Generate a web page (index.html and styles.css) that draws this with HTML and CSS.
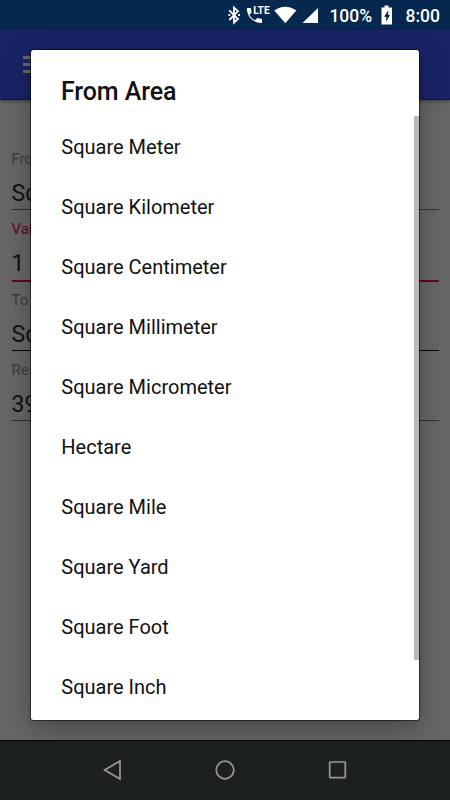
FILE: index.html
```html
<!DOCTYPE html>
<html lang="en">
<head>
<meta charset="utf-8">
<title>Area Converter</title>
<link rel="stylesheet" href="styles.css">
</head>
<body>
<div class="screen">
  <header class="status">
    <svg class="status-icons" width="100" height="30" viewBox="0 0 100 30">
      <path d="M4.3 10.3 13 19 9 22.7V7.5l4 3.7L4.3 20" fill="none" stroke="#fff" stroke-width="1.8"/>
      <path d="M3.4 15h1.8M13.2 15h1.8" stroke="#fff" stroke-width="1.8"/>
      <path d="M22 8h3.7l.9 4.4-2.2 2.4c1.4 2.8 3 4.3 5.6 5.5l2.4-2.2 4.6 1V23C28.5 23.4 21.5 16.7 22 8Z" fill="#fff"/>
      <text class="lte" x="28.2" y="13.7" textLength="16.5" lengthAdjust="spacingAndGlyphs">LTE</text>
      <path d="M49.3 10.6C55.6 5.3 65 5.3 71.3 10.6L60.3 23.2Z" fill="#fff"/>
      <path d="M93 8v15H77.5Z" fill="#fff"/>
    </svg>
    <span class="percent">100%</span>
    <svg class="battery" width="12" height="20" viewBox="0 0 12 20"><path fill="#fff" fill-rule="evenodd" d="M3.5.5h4v2H11v17H.5v-17h3ZM7.2 5.5 3 11.7h2.2v5L9 10H7.2Z"/></svg>
    <span class="clock">8:00</span>
  </header>
  <div class="appbar"><div class="menu"><i></i><i></i><i></i></div></div>
  <main class="form">
    <section class="field"><label>Fro</label><div class="value">Sq</div></section>
    <section class="field active"><label>Val</label><div class="value">1</div></section>
    <section class="field strong"><label>To</label><div class="value">Sq</div></section>
    <section class="field"><label>Res</label><div class="value">39</div></section>
  </main>
  <nav class="navbar">
    <svg width="22" height="22" viewBox="0 0 22 22"><path d="M18 2v18L2.6 11Z"/></svg>
    <svg width="22" height="22" viewBox="0 0 22 22"><circle cx="11" cy="11" r="8.8"/></svg>
    <svg width="22" height="22" viewBox="0 0 22 22"><rect x="2.7" y="3" width="15.6" height="15.6" rx=".5"/></svg>
  </nav>
  <div class="dialog">
    <h1>From Area</h1>
    <div class="list">
      <ul>
        <li>Square Meter</li><li>Square Kilometer</li><li>Square Centimeter</li><li>Square Millimeter</li><li>Square Micrometer</li>
        <li>Hectare</li><li>Square Mile</li><li>Square Yard</li><li>Square Foot</li><li>Square Inch</li>
      </ul>
      <div class="thumb"></div>
    </div>
  </div>
</div>
</body>
</html>
```
FILE: styles.css
```css
* { box-sizing: border-box; }
body { margin: 0; font-family: Roboto, sans-serif; }
.screen {
  position: relative;
  display: flex;
  flex-direction: column;
  width: 450px;
  height: 800px;
  overflow: hidden;
  background: #666;
}
.status {
  display: flex;
  align-items: center;
  flex: none;
  height: 30px;
  padding-left: 225px;
  background: #06284e;
  color: #fff;
  font-size: 17.5px;
  font-weight: 500;
  line-height: 30px;
  white-space: nowrap;
}
.status-icons { flex: none; }
.lte { fill: #fff; font-size: 11px; font-weight: 700; stroke: #06284e; stroke-width: 1px; paint-order: stroke; }
.percent { width: 56px; padding: 1px 0 0 4.4px; }
.battery { flex: none; }
.clock { margin-left: 12.5px; padding-top: 1px; }
.appbar {
  flex: none;
  height: 70px;
  padding: 26px 0 0 23px;
  background: #1a2366;
  border-bottom: 1px solid #071863;
  box-shadow: 0 1px 4px rgba(0, 0, 0, .45);
}
.menu { display: grid; gap: 4px; width: 23px; }
.menu i { height: 3px; background: #666; }
.form { flex: 1; padding: 47px 11px 0 11.5px; }
.field {
  height: 70.4px;
  color: #3b3b3b;
}
.field label {
  display: block;
  height: 24px;
  font-size: 15px;
  line-height: 24px;
}
.value {
  height: 39px;
  border-bottom: 1px solid #303030;
  color: #111;
  font-size: 23px;
  line-height: 46px;
  white-space: nowrap;
}
.active label { color: #64002a; }
.active .value { height: 40.5px; border-bottom: 2px solid #64002a; }
.strong .value { border-color: #080808; }
.navbar {
  display: flex;
  justify-content: center;
  align-items: center;
  gap: 90.5px;
  flex: none;
  height: 60px;
  padding-bottom: 1px;
  border-top: 1px solid #000;
  background: #1c2021;
}
.navbar svg { fill: none; stroke: #999; stroke-width: 1.7; }
.dialog {
  position: absolute;
  left: 31px;
  top: 50px;
  display: flex;
  flex-direction: column;
  width: 388px;
  height: 670px;
  border-radius: 2.5px;
  background: #fff;
  box-shadow: 0 0 1px 1px rgba(0, 0, 0, .55), 0 9px 28px rgba(0, 0, 0, .3);
}
h1 {
  height: 66px;
  margin: 0;
  padding: 26px 30px 0;
  color: #121212;
  font-size: 25px;
  letter-spacing: -.1px;
  font-weight: 500;
  line-height: 31px;
}
.list { display: flex; flex: 1; }
ul { flex: 1; margin: 0; padding: 1px 30.3px 0; list-style: none; }
li { height: 60px; color: #111; font-size: 20px; line-height: 60px; }
.thumb { width: 5px; height: 544px; background: #b9b9b9; }
```
